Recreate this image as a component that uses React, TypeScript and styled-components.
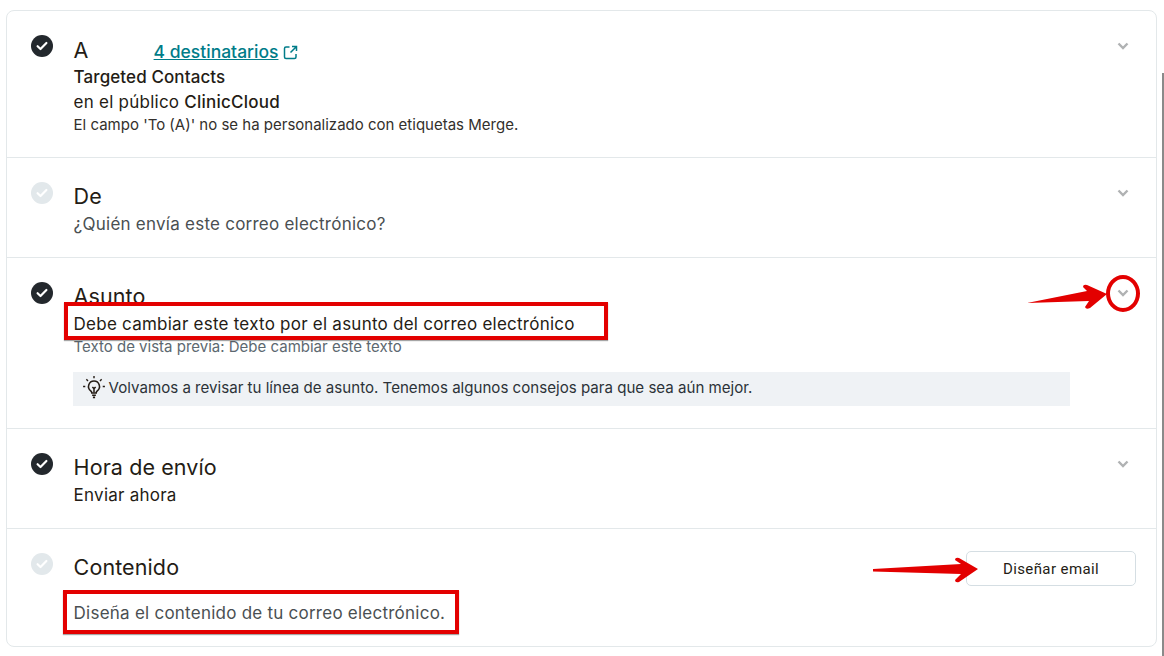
import { FC, ReactNode } from 'react';
import styled, { createGlobalStyle } from 'styled-components';

const GlobalStyle = createGlobalStyle`
  html, body {
    margin: 0;
    padding: 0;
    height: 100%;
    overflow: hidden;
    background: #fff;
  }
  body {
    font-family: 'Inter', 'Liberation Sans', sans-serif;
    color: #241c15;
  }
`;

const CheckBadge: FC<{ done?: boolean }> = ({ done }) => (
  <Badge $done={done}>
    <svg width="12" height="10" viewBox="0 0 12 10" fill="none">
      <path
        d="M1.6 5.2 4.5 8 10.4 2"
        stroke="#fff"
        strokeWidth="2.2"
        strokeLinecap="round"
        strokeLinejoin="round"
      />
    </svg>
  </Badge>
);

const Chevron: FC = () => (
  <ChevronBox>
    <svg width="12" height="8" viewBox="0 0 12 8" fill="none">
      <path d="M1.5 1.5 6 6l4.500-4.500" stroke="#b0b2b3" strokeWidth="2.4" />
    </svg>
  </ChevronBox>
);

const Step: FC<{ done?: boolean; action?: ReactNode; children: ReactNode }> = ({
  done,
  action,
  children,
}) => (
  <Row>
    <CheckBadge done={done} />
    <Body>{children}</Body>
    {action ?? <Chevron />}
  </Row>
);

const App: FC = () => (
  <>
    <GlobalStyle />
    <Page>
      <Card>
        <Step done>
          <ToLine>
            <ToTitle>A</ToTitle>
            <Recipients href="#">4 destinatarios</Recipients>
            <ExternalIcon width="15" height="15" viewBox="0 0 15 15" fill="none">
              <path
                d="M6.500 2H3a1.500 1.500 0 0 0-1.500 1.500V12A1.500 1.500 0 0 0 3 13.500h8.500A1.500 1.500 0 0 0 13 12V9"
                stroke="#007c89"
                strokeWidth="1.500"
              />
              <path d="M9 1.500h4.500V6M13.500 1.500 7.500 7.500" stroke="#007c89" strokeWidth="1.500" />
            </ExternalIcon>
          </ToLine>
          <Audience>Targeted Contacts</Audience>
          <AudienceLine>
            en el público <strong>ClinicCloud</strong>
          </AudienceLine>
          <Hint>El campo 'To (A)' no se ha personalizado con etiquetas Merge.</Hint>
        </Step>

        <Step>
          <Title>De</Title>
          <Muted>¿Quién envía este correo electrónico?</Muted>
        </Step>

        <Step done>
          <Title>Asunto</Title>
          <Subject>Debe cambiar este texto por el asunto del correo electrónico</Subject>
          <Preview>Texto de vista previa: Debe cambiar este texto</Preview>
          <Tip>
            <svg width="24" height="24" viewBox="0 0 22 22" fill="none" stroke="#241c15" strokeWidth="1.400">
              <path d="M11 5.500a5 5 0 0 0-3 9c.7.600 1 1 1 2h4c0-1 .3-1.400 1-2a5 5 0 0 0-3-9Z" />
              <path d="M9.300 18.500h3.400M10 20.500h2M9.500 11l1.500 1.500 1.500-1.500M11 12.500v3.500" />
              <path d="M11 1v2M4 4l1.500 1.500M18 4l-1.500 1.500M1 10.500h2M19 10.500h2" strokeWidth="1.300" />
            </svg>
            Volvamos a revisar tu línea de asunto. Tenemos algunos consejos para que sea aún mejor.
          </Tip>
        </Step>

        <Step done>
          <Title>Hora de envío</Title>
          <Subject>Enviar ahora</Subject>
        </Step>

        <Step action={<DesignButton>Diseñar email</DesignButton>}>
          <Title>Contenido</Title>
          <ContentText>Diseña el contenido de tu correo electrónico.</ContentText>
        </Step>
      </Card>
      <ScrollThumb />

      <RedBox $left={64} $top={302} $width={544} $height={38} />
      <RedCircle />
      <Arrow $left={1027} $top={283} width="82" height="28" viewBox="0 0 82 28">
        <path d="M0 20 L60 8 L56 4 Q56 1 60 2 L80 11 L63 25 Q59 27 58 24 L62 18 Z" fill="#e30000" />
      </Arrow>
      <Arrow $left={873} $top={556} width="106" height="28" viewBox="0 0 106 28">
        <path d="M0 13 L88 8 L82 4 Q82 1 86 2 L105 13 L86 26 Q82 27 82 24 L88 18 L0 15.500 Z" fill="#e30000" />
      </Arrow>
      <RedBox $left={63} $top={590} $width={396} $height={44} />
    </Page>
  </>
);

const Page = styled.div`
  position: relative;
  width: 1164px;
  height: 656px;
  padding: 10px 7px 0 6px;
  box-sizing: border-box;
  overflow: hidden;
`;

const Card = styled.section`
  border: 1px solid #e3e8ea;
  border-radius: 8px;
  height: 637px;
  box-sizing: border-box;
  overflow: hidden;
`;

const Row = styled.div`
  display: flex;
  align-items: flex-start;
  padding: 24px;
  border-bottom: 1px solid #e3e8ea;
  box-sizing: border-box;

  &:nth-child(1) {
    height: 147px;
  }
  &:nth-child(2),
  &:nth-child(4) {
    height: 100px;
  }
  &:nth-child(3) {
    height: 171px;
  }
  &:last-child {
    border-bottom: 0;
  }
`;

const Badge = styled.span<{ $done?: boolean }>`
  flex: none;
  width: 22px;
  height: 22px;
  border-radius: 50%;
  display: flex;
  align-items: center;
  justify-content: center;
  background: ${(p) => (p.$done ? '#23282d' : '#e2e8eb')};
`;

const Body = styled.div`
  flex: 1;
  margin-left: 20.600px;
  min-width: 0;
`;

const Title = styled.h3`
  margin: 0;
  font-size: 21.500px;
  line-height: 28px;
  font-weight: 400;
  letter-spacing: 0.1px;
  color: #241c15;
`;

const ToLine = styled.div`
  display: flex;
  align-items: center;
  height: 28px;
  margin: 1px 0;
`;

const ToTitle = styled(Title)`
  width: 80px;
`;

const Recipients = styled.a`
  margin-top: 2px;
  color: #007c89;
  font-size: 17.500px;
  font-weight: 500;
  text-decoration: underline;
`;

const ExternalIcon = styled.svg`
  margin-left: 5px;
  margin-top: 4px;
`;

const Audience = styled.div`
  font-size: 17px;
  line-height: 25px;
  font-weight: 500;
  letter-spacing: 0.1px;
`;

const AudienceLine = styled.div`
  font-size: 17px;
  line-height: 25px;
  letter-spacing: 0.24px;

  strong {
    font-weight: 500;
  }
`;

const Hint = styled.div`
  font-size: 15px;
  line-height: 20px;
  color: #33302c;
`;

const Muted = styled.div`
  font-size: 17px;
  line-height: 28px;
  letter-spacing: 0.24px;
  color: #4a4f52;
`;

const Subject = styled.div`
  font-size: 17px;
  line-height: 28px;
  letter-spacing: 0.24px;
`;

const Preview = styled.div`
  font-size: 15px;
  line-height: 18px;
  color: #5c6870;
`;

const Tip = styled.div`
  display: flex;
  align-items: center;
  gap: 3px;
  margin: 16px 0 0 -0.600px;
  padding: 0 0 4px 8.600px;
  width: 997px;
  height: 34px;
  box-sizing: border-box;
  background: #eff2f5;
  font-size: 15.100px;
  color: #2c3238;
`;

const ContentText = styled.div`
  margin-top: 18px;
  font-size: 17px;
  line-height: 28px;
  letter-spacing: 0.24px;
  color: #4a4f52;
`;

const ChevronBox = styled.span`
  flex: none;
  display: flex;
  justify-content: center;
  width: 12px;
  margin: 7px 3px 0 0;
`;

const DesignButton = styled.button`
  flex: none;
  width: 170px;
  height: 35px;
  margin: -2px -4px 0 0;
  border: 1px solid #d5dee3;
  border-radius: 5px;
  background: #fff;
  font-family: Roboto, 'Liberation Sans', sans-serif;
  font-size: 15px;
  letter-spacing: 0.4px;
  color: #241c15;
`;

const ScrollThumb = styled.div`
  position: absolute;
  right: 0;
  top: 73px;
  width: 2px;
  height: 583px;
  background: #8a8a8a;
`;

const RedBox = styled.div<{ $left: number; $top: number; $width: number; $height: number }>`
  position: absolute;
  left: ${(p) => p.$left}px;
  top: ${(p) => p.$top}px;
  width: ${(p) => p.$width}px;
  height: ${(p) => p.$height}px;
  box-sizing: border-box;
  border: 4px solid #e30000;
  box-shadow: 0 1px 1px rgba(0, 0, 0, 0.35);
`;

const RedCircle = styled.div`
  position: absolute;
  left: 1106px;
  top: 275px;
  width: 34px;
  height: 37px;
  box-sizing: border-box;
  border: 4px solid #e30000;
  border-radius: 50%;
`;

const Arrow = styled.svg<{ $left: number; $top: number }>`
  position: absolute;
  left: ${(p) => p.$left}px;
  top: ${(p) => p.$top}px;
`;

export default App;
